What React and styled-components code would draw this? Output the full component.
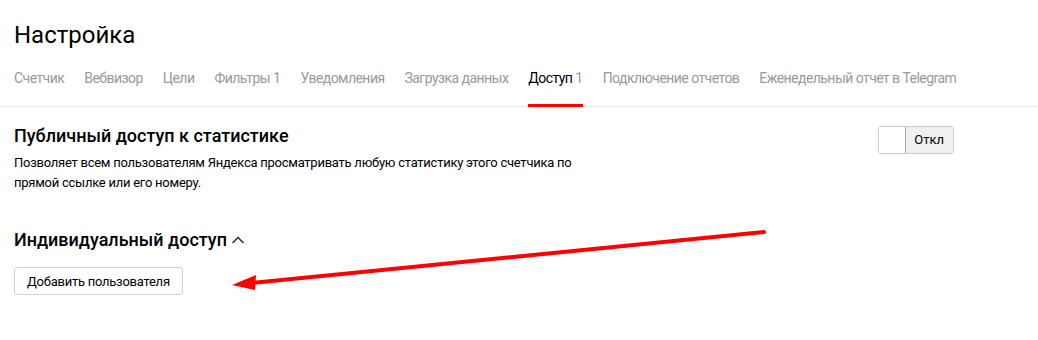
import styled, { createGlobalStyle } from "styled-components";

const GlobalStyle = createGlobalStyle`
  body {
    margin: 0;
    background: #fff;
    font-family: Roboto, "Liberation Sans", Arial, sans-serif;
    color: #000;
  }
`;

const Page = styled.div`
  position: relative;
  width: 1038px;
  height: 340px;
  overflow: hidden;
`;

const Header = styled.div`
  padding: 20px 14px 0;
  border-bottom: 1px solid #e5e5e5;
`;

const Title = styled.h1`
  margin: 0;
  font-size: 24px;
  font-weight: 400;
  line-height: 30px;
`;

const Tabs = styled.div`
  display: flex;
  gap: 20px;
  margin-top: 17px;
`;

const Tab = styled.div`
  font-size: 14px;
  letter-spacing: -0.55px;
  line-height: 16px;
  padding: 3px 0 18px;
  color: ${(p) => (p.$active ? "#000" : "#999")};
  border-bottom: 3px solid ${(p) => (p.$active ? "#f00" : "transparent")};
  margin-bottom: -1px;

  span {
    color: #999;
  }
`;

const Content = styled.div`
  padding: 0 14px;
`;

const SectionRow = styled.div`
  display: flex;
  justify-content: space-between;
  align-items: flex-start;
  width: 940px;
  padding-top: 18px;
`;

const SectionTitle = styled.h2`
  margin: 0;
  font-size: 18px;
  font-weight: 500;
  line-height: 22px;
  display: flex;
  align-items: center;
  gap: 4px;
`;

const Description = styled.p`
  margin: 6px 0 0;
  width: 570px;
  font-size: 13px;
  letter-spacing: -0.25px;
  line-height: 20px;
`;

const Toggle = styled.div`
  display: flex;
  height: 26px;
  border: 1px solid #ccc;
  border-radius: 3px;
  overflow: hidden;
  margin-top: 1px;
`;

const Knob = styled.div`
  width: 26px;
  background: #fff;
  border-right: 1px solid #aaa;
`;

const ToggleLabel = styled.div`
  background: #f0f0f0;
  font-size: 13px;
  line-height: 26px;
  padding: 0 9px 0 8px;
`;

const Individual = styled.div`
  margin-top: 36px;
`;

const Button = styled.button`
  display: block;
  margin-top: 16px;
  height: 28px;
  padding: 0 12px;
  border: 1px solid #d0d0d0;
  border-radius: 3px;
  background: #fff;
  font-family: inherit;
  font-size: 13px;
  letter-spacing: -0.25px;
  color: #000;
`;

const Annotation = styled.svg`
  position: absolute;
  left: 0;
  top: 0;
  pointer-events: none;
`;

const tabs = [
  ["Счетчик"],
  ["Вебвизор"],
  ["Цели"],
  ["Фильтры", "1"],
  ["Уведомления"],
  ["Загрузка данных"],
  ["Доступ", "1", true],
  ["Подключение отчетов"],
  ["Еженедельный отчет в Telegram"],
];

export default function App() {
  return (
    <Page>
      <GlobalStyle />
      <Header>
        <Title>Настройка</Title>
        <Tabs>
          {tabs.map(([label, count, active]) => (
            <Tab key={label} $active={active}>
              {label}
              {count && <span> {count}</span>}
            </Tab>
          ))}
        </Tabs>
      </Header>
      <Content>
        <SectionRow>
          <div>
            <SectionTitle>Публичный доступ к статистике</SectionTitle>
            <Description>
              Позволяет всем пользователям Яндекса просматривать любую статистику
              этого счетчика по прямой ссылке или его номеру.
            </Description>
          </div>
          <Toggle>
            <Knob />
            <ToggleLabel>Откл</ToggleLabel>
          </Toggle>
        </SectionRow>
        <Individual>
          <SectionTitle>
            Индивидуальный доступ
            <svg width="14" height="10" viewBox="0 0 14 10">
              <path d="M1.5 8 L7 2.5 L12.5 8" fill="none" stroke="#222" strokeWidth="1.4" />
            </svg>
          </SectionTitle>
          <Button>Добавить пользователя</Button>
        </Individual>
      </Content>
      <Annotation width="1038" height="340">
        <line x1="764" y1="232" x2="252" y2="283" stroke="#f00" strokeWidth="4" strokeLinecap="round" />
        <polygon points="232,285 256,275 255,290" fill="#f00" />
      </Annotation>
    </Page>
  );
}
